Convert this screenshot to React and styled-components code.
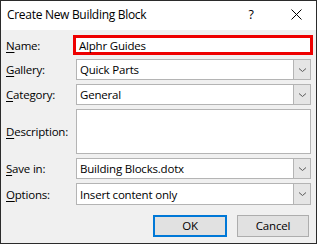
import React from "react";
import styled, { createGlobalStyle } from "styled-components";

const Global = createGlobalStyle`
  html, body { margin: 0; padding: 0; background: #f0f0f0; }
  body {
    font-family: "Open Sans", "Noto Sans", sans-serif;
    font-size: 11.5px;
    letter-spacing: -0.2px;
    color: #000;
  }
  * { box-sizing: border-box; }
`;

const Window = styled.div`
  width: 317px;
  height: 244px;
  border: 1px solid #2b2b2b;
  background: #f0f0f0;
  display: flex;
  flex-direction: column;
`;

const TitleBar = styled.div`
  height: 29px;
  background: #fff;
  display: flex;
  align-items: center;
  padding-left: 6px;
`;

const Title = styled.div`
  flex: 1;
  font-size: 12px;
  letter-spacing: -0.3px;
  padding-bottom: 3px;
`;

const TitleButton = styled.div`
  width: ${(p) => p.$w}px;
  height: 29px;
  display: flex;
  align-items: center;
  justify-content: center;
  font-size: 12.5px;
  padding-bottom: 3px;
`;

const Form = styled.div`
  display: grid;
  grid-template-columns: 70px 235px;
  grid-template-rows: 20px 21px 21px 45px 21px 22px;
  row-gap: 4px;
  padding: 5px 0 0 5px;
`;

const Label = styled.div`
  display: flex;
  align-items: center;
  white-space: nowrap;
  u { text-decoration: underline; text-underline-offset: 2px; }
`;

const Field = styled.div`
  background: #fff;
  border: 1px solid #b4b4b4;
  display: flex;
  align-items: stretch;
  min-width: 0;
`;

const Highlight = styled.div`
  margin: 0 -2px 0 -3px;
  border: 3px solid #ee0000;
  background: #fff;
  display: flex;
  align-items: center;
  padding-left: 3px;
`;

const Value = styled.div`
  flex: 1;
  display: flex;
  align-items: center;
  padding-left: 3px;
  white-space: nowrap;
  overflow: hidden;
`;

const DropButton = styled.div`
  width: 17px;
  background: #e5e5e5;
  border-left: 1px solid #b4b4b4;
  display: flex;
  align-items: center;
  justify-content: center;
`;

const Footer = styled.div`
  display: flex;
  justify-content: flex-end;
  gap: 10px;
  padding: 10px 7px 0 0;
`;

const Button = styled.div`
  width: ${(p) => p.$w}px;
  height: 22px;
  background: #e1e1e1;
  border: ${(p) => (p.$primary ? "2px solid #0078d7" : "1px solid #adadad")};
  display: flex;
  align-items: center;
  justify-content: center;
  padding-bottom: 1px;
`;

const Chevron = () => (
  <svg width="9" height="6" viewBox="0 0 9 6">
    <path d="M1 1.5 L4.5 4.5 L8 1.5" fill="none" stroke="#5a5a5a" strokeWidth="1" />
  </svg>
);

const Combo = ({ children }) => (
  <Field>
    <Value>{children}</Value>
    <DropButton>
      <Chevron />
    </DropButton>
  </Field>
);

export default function App() {
  return (
    <>
      <Global />
      <Window>
        <TitleBar>
          <Title>Create New Building Block</Title>
          <TitleButton $w={50}>?</TitleButton>
          <TitleButton $w={40}>
            <svg width="11" height="11" viewBox="0 0 11 11">
              <path d="M0.5 0.5 L10.5 10.5 M10.5 0.5 L0.5 10.5" stroke="#000" strokeWidth="1" />
            </svg>
          </TitleButton>
        </TitleBar>
        <Form>
          <Label>
            <u>N</u>ame:
          </Label>
          <Highlight>Alphr Guides</Highlight>
          <Label>
            <u>G</u>allery:
          </Label>
          <Combo>Quick Parts</Combo>
          <Label>
            <u>C</u>ategory:
          </Label>
          <Combo>General</Combo>
          <Label>
            <u>D</u>escription:
          </Label>
          <Field />
          <Label>
            <u>S</u>ave in:
          </Label>
          <Combo>Building Blocks.dotx</Combo>
          <Label>
            <u>O</u>ptions:
          </Label>
          <Combo>Insert content only</Combo>
        </Form>
        <Footer>
          <Button $w={74} $primary>OK</Button>
          <Button $w={72}>Cancel</Button>
        </Footer>
      </Window>
    </>
  );
}
